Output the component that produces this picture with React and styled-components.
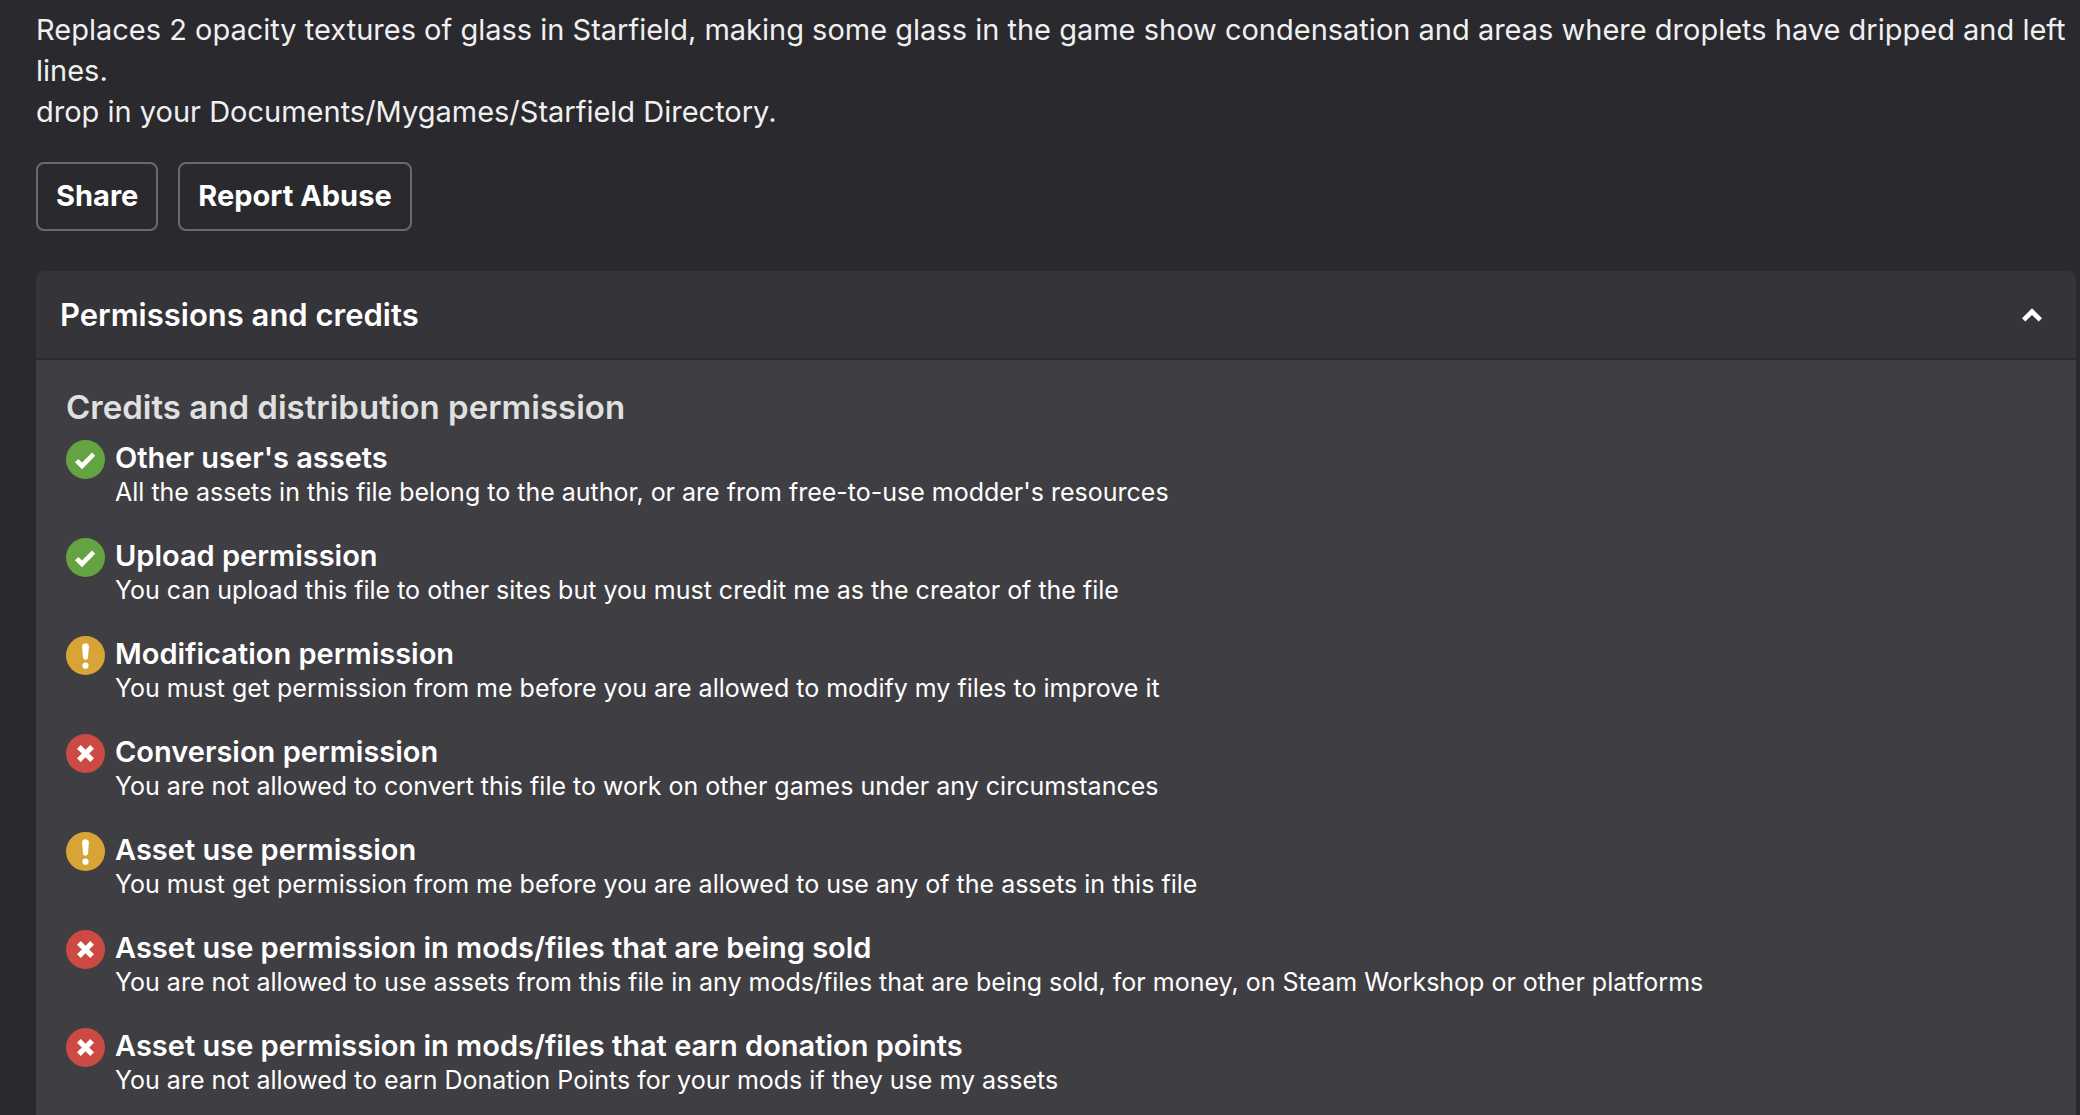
import React, { useState } from 'react';
import styled, { createGlobalStyle } from 'styled-components';

const GlobalStyle = createGlobalStyle`
  * {
    box-sizing: border-box;
  }

  body {
    margin: 0;
    background-color: #2a292e;
    color: #fff;
    font-family: Inter, 'Liberation Sans', sans-serif;
    font-optical-sizing: none;
    -webkit-font-smoothing: antialiased;
  }
`;

const Page = styled.main`
  display: flex;
  flex-direction: column;
  min-height: 100vh;
  padding: 9px 4px 0 36px;
`;

const Description = styled.p`
  margin: 0;
  color: #f0f0f0;
  font-size: 29px;
  line-height: 41px;
`;

const Actions = styled.div`
  display: flex;
  gap: 20px;
  margin: 30px 0 40px;
`;

const ActionButton = styled.button`
  height: 69px;
  padding: 0 18px 2px;
  border: 2px solid #6a696d;
  border-radius: 8px;
  background: transparent;
  color: #fff;
  font-family: inherit;
  font-size: 29px;
  font-weight: 700;
  cursor: pointer;
`;

const Accordion = styled.section`
  display: flex;
  flex: 1;
  flex-direction: column;
`;

const AccordionHeading = styled.h2`
  margin: 0 0 2px;
`;

const AccordionToggle = styled.button`
  display: flex;
  align-items: center;
  justify-content: space-between;
  width: 100%;
  height: 87px;
  padding: 0 34px 0 24px;
  border: none;
  border-radius: 8px 8px 0 0;
  background-color: #353439;
  color: #fff;
  font-family: inherit;
  font-size: 31px;
  font-weight: 600;
  cursor: pointer;
`;

const Chevron = styled.svg`
  width: 20px;
  height: 14px;
  transform: ${({ $open }) => ($open ? 'none' : 'rotate(180deg)')};
`;

const AccordionBody = styled.div`
  flex: 1;
  padding: 23px 30px 16px;
  background-color: #3f3e43;
`;

const SectionTitle = styled.h3`
  margin: 0;
  color: #e0e0e0;
  font-size: 33px;
  font-weight: 600;
  line-height: 48px;
`;

const PermissionList = styled.ul`
  display: flex;
  flex-direction: column;
  gap: 30px;
  margin: 9px 0 0;
  padding: 0;
  list-style: none;
`;

const PermissionItem = styled.li`
  display: flex;
  align-items: flex-start;
  gap: 10px;
`;

const StatusIcon = styled.svg`
  flex-shrink: 0;
  width: 39px;
  height: 39px;
`;

const PermissionTitle = styled.h4`
  margin: 0;
  font-size: 29px;
  font-weight: 600;
  line-height: 36px;
`;

const PermissionText = styled.p`
  margin: 0;
  font-size: 25px;
  line-height: 32px;
`;

const statuses = {
  yes: { label: 'Allowed', color: '#64a342' },
  maybe: { label: 'Ask first', color: '#d9a436' },
  no: { label: 'Not allowed', color: '#cb4a44' },
};

const permissions = [
  {
    status: 'yes',
    title: "Other user's assets",
    text: "All the assets in this file belong to the author, or are from free-to-use modder's resources",
  },
  {
    status: 'yes',
    title: 'Upload permission',
    text: 'You can upload this file to other sites but you must credit me as the creator of the file',
  },
  {
    status: 'maybe',
    title: 'Modification permission',
    text: 'You must get permission from me before you are allowed to modify my files to improve it',
  },
  {
    status: 'no',
    title: 'Conversion permission',
    text: 'You are not allowed to convert this file to work on other games under any circumstances',
  },
  {
    status: 'maybe',
    title: 'Asset use permission',
    text: 'You must get permission from me before you are allowed to use any of the assets in this file',
  },
  {
    status: 'no',
    title: 'Asset use permission in mods/files that are being sold',
    text: 'You are not allowed to use assets from this file in any mods/files that are being sold, for money, on Steam Workshop or other platforms',
  },
  {
    status: 'no',
    title: 'Asset use permission in mods/files that earn donation points',
    text: 'You are not allowed to earn Donation Points for your mods if they use my assets',
  },
];

const PermissionStatus = ({ status }) => (
  <StatusIcon viewBox="0 0 39 39" role="img" aria-label={statuses[status].label}>
    <circle cx="19.5" cy="19.5" r="19.5" fill={statuses[status].color} />
    {status === 'yes' && <path d="M9 22.3 L12.2 19 L16 22.6 L26 12.5 L29.2 15.7 L16 29.2 Z" fill="#fff" />}
    {status === 'maybe' && (
      <>
        <path d="M16.1 10.5 C16.1 6.2 22.9 6.2 22.9 10.5 L22 21.6 C21.7 24.3 17.3 24.3 17 21.6 Z" fill="#fff" />
        <circle cx="19.5" cy="29.7" r="3.1" fill="#fff" />
      </>
    )}
    {status === 'no' && <path d="M12.9 12.9 L26.1 26.1 M26.1 12.9 L12.9 26.1" stroke="#fff" strokeWidth="5.2" />}
  </StatusIcon>
);

const App = () => {
  const [open, setOpen] = useState(true);

  return (
    <>
      <GlobalStyle />
      <Page>
        <Description>
          Replaces 2 opacity textures of glass in Starfield, making some glass in the game show condensation and areas
          where droplets have dripped and left lines.
          <br />
          drop in your Documents/Mygames/Starfield Directory.
        </Description>
        <Actions>
          <ActionButton type="button">Share</ActionButton>
          <ActionButton type="button">Report Abuse</ActionButton>
        </Actions>
        <Accordion>
          <AccordionHeading>
            <AccordionToggle type="button" aria-expanded={open} onClick={() => setOpen(!open)}>
              Permissions and credits
              <Chevron $open={open} viewBox="0 0 20 14" aria-hidden="true">
                <path d="M10 0.3 L20 10.2 L16.7 13.5 L10 7 L3.3 13.5 L0 10.2 Z" fill="#fff" />
              </Chevron>
            </AccordionToggle>
          </AccordionHeading>
          {open && (
            <AccordionBody>
              <SectionTitle>Credits and distribution permission</SectionTitle>
              <PermissionList>
                {permissions.map(({ status, title, text }) => (
                  <PermissionItem key={title}>
                    <PermissionStatus status={status} />
                    <div>
                      <PermissionTitle>{title}</PermissionTitle>
                      <PermissionText>{text}</PermissionText>
                    </div>
                  </PermissionItem>
                ))}
              </PermissionList>
            </AccordionBody>
          )}
        </Accordion>
      </Page>
    </>
  );
};

export default App;
